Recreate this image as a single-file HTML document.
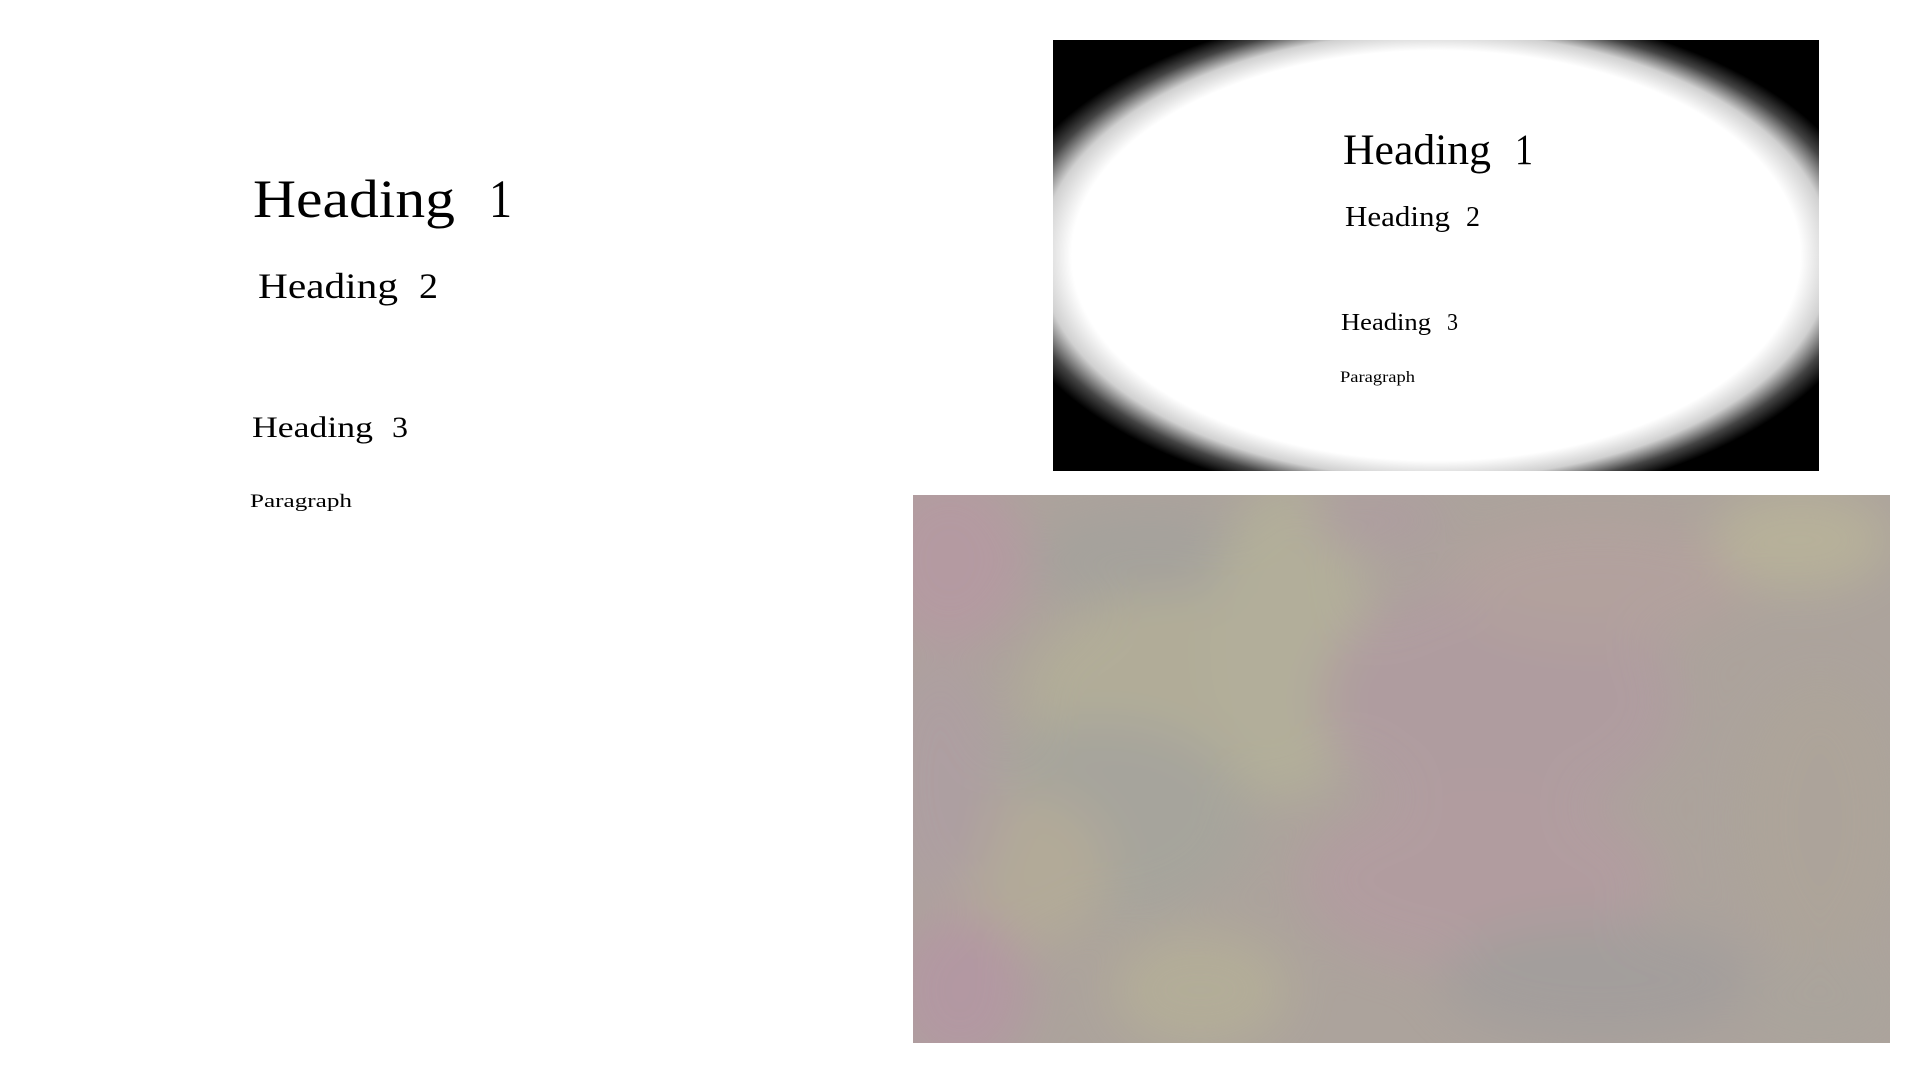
<!DOCTYPE html>
<html><head><meta charset="utf-8"><style>
html,body{margin:0;padding:0;background:#fff;width:1920px;height:1080px;overflow:hidden}
svg{display:block}
text{font-family:"Liberation Serif",serif;fill:#000}
</style></head><body>
<svg width="1920" height="1080" viewBox="0 0 1920 1080" xmlns="http://www.w3.org/2000/svg">
<defs>
<radialGradient id="vig2" cx="50%" cy="50%" r="58%">
<stop offset="0" stop-color="#fff"/>
<stop offset="0.82" stop-color="#fff"/>
<stop offset="0.89" stop-color="#d0d0d0"/>
<stop offset="0.95" stop-color="#444"/>
<stop offset="1" stop-color="#000"/>
</radialGradient>
<filter id="bl" x="-20%" y="-20%" width="140%" height="140%"><feGaussianBlur stdDeviation="24"/></filter>
<clipPath id="tc"><rect x="913" y="495" width="977" height="548"/></clipPath>
</defs>

<rect x="1053" y="40" width="766" height="431" fill="url(#vig2)"/>

<rect x="913" y="495" width="977" height="548" fill="#aca39c"/>
<g clip-path="url(#tc)" filter="url(#bl)" opacity="0.9">
<ellipse cx="950" cy="560" rx="80" ry="90" fill="#b59aa2"/>
<ellipse cx="1150" cy="560" rx="120" ry="50" fill="#a4a29c"/>
<ellipse cx="1180" cy="700" rx="160" ry="110" fill="#b2ae98"/>
<ellipse cx="1290" cy="640" rx="80" ry="160" fill="#b3b09a"/>
<ellipse cx="1100" cy="820" rx="150" ry="100" fill="#a6a59c"/>
<ellipse cx="1020" cy="870" rx="90" ry="80" fill="#b3ab98"/>
<ellipse cx="940" cy="780" rx="60" ry="120" fill="#ae9fa2"/>
<ellipse cx="960" cy="990" rx="70" ry="80" fill="#b497a3"/>
<ellipse cx="1200" cy="990" rx="90" ry="60" fill="#b4ae98"/>
<ellipse cx="1500" cy="700" rx="180" ry="120" fill="#b09ca0"/>
<ellipse cx="1480" cy="880" rx="180" ry="90" fill="#b29ca0"/>
<ellipse cx="1600" cy="580" rx="150" ry="60" fill="#b3a19e"/>
<ellipse cx="1800" cy="540" rx="90" ry="50" fill="#b8b29a"/>
<ellipse cx="1820" cy="820" rx="80" ry="140" fill="#ada49a"/>
<ellipse cx="1600" cy="980" rx="160" ry="60" fill="#a39e9c"/>
<ellipse cx="1820" cy="1000" rx="80" ry="50" fill="#aaa49c"/>
<ellipse cx="1380" cy="520" rx="70" ry="30" fill="#ae9da0"/>
</g>

<text x="253" y="217" font-size="54" textLength="202" lengthAdjust="spacingAndGlyphs">Heading</text>
<text x="489" y="217" font-size="54" textLength="23" lengthAdjust="spacingAndGlyphs">1</text>
<text x="258" y="298" font-size="36" textLength="140" lengthAdjust="spacingAndGlyphs">Heading</text>
<text x="419" y="298" font-size="36" textLength="19" lengthAdjust="spacingAndGlyphs">2</text>
<text x="252" y="437" font-size="30" textLength="121" lengthAdjust="spacingAndGlyphs">Heading</text>
<text x="392" y="437" font-size="30" textLength="16" lengthAdjust="spacingAndGlyphs">3</text>
<text x="250" y="507" font-size="19" textLength="102" lengthAdjust="spacingAndGlyphs">Paragraph</text>

<text x="1343" y="164" font-size="43" textLength="148" lengthAdjust="spacingAndGlyphs">Heading</text>
<text x="1515" y="164" font-size="43" textLength="18" lengthAdjust="spacingAndGlyphs">1</text>
<text x="1345" y="226" font-size="29" textLength="105" lengthAdjust="spacingAndGlyphs">Heading</text>
<text x="1466" y="226" font-size="29" textLength="14" lengthAdjust="spacingAndGlyphs">2</text>
<text x="1341" y="330" font-size="24" textLength="90" lengthAdjust="spacingAndGlyphs">Heading</text>
<text x="1447" y="330" font-size="24" textLength="11" lengthAdjust="spacingAndGlyphs">3</text>
<text x="1340" y="382" font-size="16" textLength="75" lengthAdjust="spacingAndGlyphs">Paragraph</text>
</svg>
</body></html>
